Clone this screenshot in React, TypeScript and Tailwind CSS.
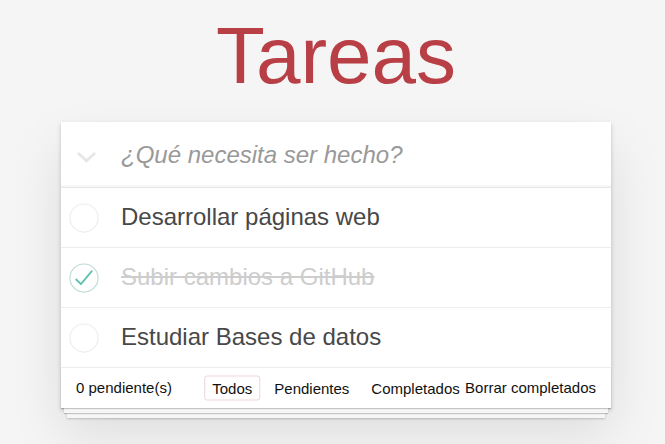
import React from "react";

interface Todo {
  id: number;
  title: string;
  done: boolean;
}

const todos: Todo[] = [
  { id: 1, title: "Desarrollar páginas web", done: false },
  { id: 2, title: "Subir cambios a GitHub", done: true },
  { id: 3, title: "Estudiar Bases de datos", done: false },
];

function Toggle({ done }: { done: boolean }) {
  return (
    <svg width="30" height="30" viewBox="0 0 32 32" fill="none">
      <circle cx="16" cy="16" r="15" stroke={done ? "#bddad5" : "#ededed"} strokeWidth="1.2" />
      {done && (
        <path
          d="M7.7 17.6L12.7 22.6L24.3 8.7"
          stroke="#5dc2af"
          strokeWidth="1.9"
          strokeLinecap="round"
          strokeLinejoin="round"
        />
      )}
    </svg>
  );
}

export default function App() {
  const pending = 0;

  return (
    <div className="min-h-screen bg-[#f5f5f5] font-['Liberation_Sans',Arial,sans-serif]">
      <div className="ml-[61px] w-[550px] pt-[16px]">
        <h1 className="text-center text-[80px] leading-none text-[#b83f45]">Tareas</h1>

        <section className="mt-[26px] bg-white shadow-[0_2px_4px_0_rgba(0,0,0,0.2),0_25px_50px_0_rgba(0,0,0,0.1)]">
          {/* New todo */}
          <div className="flex h-[65px] items-center shadow-[inset_0_-2px_1px_rgba(0,0,0,0.03)]">
            <div className="w-[60px] pl-[16px] pt-[6px]">
              <svg width="19" height="11" viewBox="0 0 19 11" fill="none">
                <path d="M1.8 1.8L9.5 8.8L17.2 1.8" stroke="#e6e6e6" strokeWidth="2.8" strokeLinecap="round" />
              </svg>
            </div>
            <span className="text-[24px] italic text-[#999999]">¿Qué necesita ser hecho?</span>
          </div>

          {/* List */}
          <ul className="border-t border-[#e6e6e6]">
            {todos.map((t) => (
              <li key={t.id} className="flex h-[60px] items-center border-b border-[#ededed]">
                <div className="w-[60px] pl-[8px]">
                  <Toggle done={t.done} />
                </div>
                <span
                  className={`text-[24px] leading-[1.2] ${t.done ? "text-[#cdcdcd] line-through" : "text-[#484848]"}`}
                >
                  {t.title}
                </span>
              </li>
            ))}
          </ul>

          {/* Footer */}
          <footer className="relative flex h-[40px] items-center justify-between px-[15px] text-[15px] text-[#111111] shadow-[0_1px_1px_rgba(0,0,0,0.2),0_8px_0_-3px_#f6f6f6,0_9px_1px_-3px_rgba(0,0,0,0.2),0_16px_0_-6px_#f6f6f6,0_17px_2px_-6px_rgba(0,0,0,0.2)]">
            <span>{pending} pendiente(s)</span>
            <ul className="absolute left-1/2 top-1/2 flex -translate-x-1/2 -translate-y-1/2">
              <li className="mx-[3px] rounded-[3px] border border-[rgba(175,47,47,0.2)] px-[7px] py-[3px] leading-[17px]">
                Todos
              </li>
              <li className="mx-[3px] rounded-[3px] border border-transparent px-[7px] py-[3px] leading-[17px]">
                Pendientes
              </li>
              <li className="mx-[3px] rounded-[3px] border border-transparent px-[7px] py-[3px] leading-[17px]">
                Completados
              </li>
            </ul>
            <span className="relative">Borrar completados</span>
          </footer>
        </section>
      </div>
    </div>
  );
}
